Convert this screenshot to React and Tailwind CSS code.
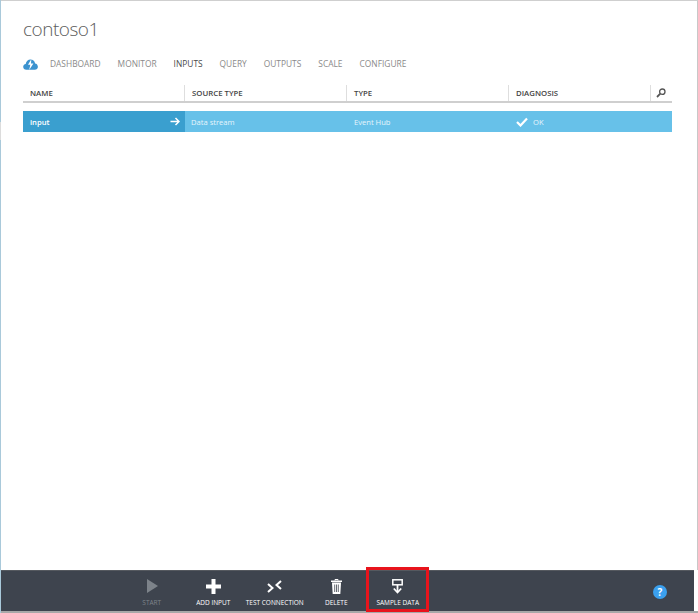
function Cloud() {
  return (
    <svg width="15" height="11" viewBox="0 0 15 11" className="block">
      <path d="M3.300 10.800C1.500 10.800.2 9.500.2 7.800c0-1.500 1-2.700 2.500-2.900C3 2.400 5.100.5 7.500.5c2.300 0 4.200 1.700 4.600 3.900 1.600.2 2.800 1.700 2.800 3.300 0 1.700-1.400 3.100-3.100 3.100z" fill="#3c93cf" />
      <path d="M8.300.2 5 5.800h2.300L6.200 11 10.400 4.600H8z" fill="#fff" />
    </svg>
  );
}

function Tool({ label, dim, children }) {
  return (
    <div className="w-[61.5px] flex flex-col items-center">
      <div className="h-[20px] flex items-center justify-center">{children}</div>
      <span className={"mt-[2px] text-[6.5px] leading-[10px] whitespace-nowrap " + (dim ? "text-[#7d838a]" : "text-white")}>{label}</span>
    </div>
  );
}

export default function App() {
  const tabs = ["DASHBOARD", "MONITOR", "INPUTS", "QUERY", "OUTPUTS", "SCALE", "CONFIGURE"];
  return (
    <div className="relative w-[698px] h-[613px] flex bg-white overflow-hidden font-['Open_Sans',sans-serif]">
      <div className="w-[1px] flex flex-col">
        <div className="h-[122px] bg-[#a9c9da]" />
        <div className="h-[18px] bg-[#dcdcdc]" />
        <div className="flex-1 bg-[#a9c9da]" />
      </div>
      <div className="flex-1 flex flex-col min-w-0">
        <div className="flex-1 flex flex-col border-t border-t-[#cfcfcf] border-r border-r-[#c8c8c8] pl-[22px] pr-[25px]">
          <h1 className="mt-[10px] text-[19px] leading-[36px] font-light text-[#5c5c5c] tracking-[-0.5px]">contoso1</h1>
          <div className="mt-[11px] flex items-center h-[12px]">
            <Cloud />
            <div className="ml-[12px] flex gap-[17px] text-[8.4px] leading-[12px] text-[#8a8a8a]">
              {tabs.map((t) => (
                <span key={t} className={t === "INPUTS" ? "text-[#4a4a4a]" : ""}>{t}</span>
              ))}
            </div>
          </div>
          <div className="mt-[15px] w-[649px] h-[18px] flex border-b-2 border-b-[#cfcfcf] text-[7.8px] leading-[17px] font-semibold text-[#444]">
            <div className="w-[161px] pl-[7px]">NAME</div>
            <div className="w-[162px] pl-[7px] border-l border-l-[#dedede]">SOURCE TYPE</div>
            <div className="w-[162px] pl-[7px] border-l border-l-[#dedede]">TYPE</div>
            <div className="w-[142px] pl-[7px] border-l border-l-[#dedede]">DIAGNOSIS</div>
            <div className="flex-1 border-l border-l-[#dedede] flex justify-center pr-[1px]">
              <svg width="10" height="10" viewBox="0 0 10 10" className="mt-[3px]">
                <circle cx="6.300" cy="3.700" r="2.700" fill="none" stroke="#555" strokeWidth="1.300" />
                <path d="M4.300 5.700 1 9" stroke="#555" strokeWidth="1.800" />
              </svg>
            </div>
          </div>
          <div className="mt-[8px] w-[649px] h-[21px] flex bg-[#67c1e9] text-[7.6px] leading-[22px] text-[#e6f5fc]">
            <div className="w-[162px] pl-[7px] pr-[5px] bg-[#3a9fcf] flex justify-between items-center font-semibold text-white">
              <span>input</span>
              <svg width="10" height="9" viewBox="0 0 10 9">
                <path d="M.5 4.500h8M5.500 1l3.500 3.500L5.500 8" fill="none" stroke="#fff" strokeWidth="1.500" />
              </svg>
            </div>
            <div className="w-[162px] pl-[6px]">Data stream</div>
            <div className="w-[162px] pl-[7px]">Event Hub</div>
            <div className="flex-1 pl-[7px] flex items-center gap-[5px]">
              <svg width="12" height="10" viewBox="0 0 12 10">
                <path d="M1 5l3.500 3.500L11 1.500" fill="none" stroke="#fff" strokeWidth="2.200" />
              </svg>
              <span>OK</span>
            </div>
          </div>
        </div>
        <div className="h-[43px] border-b-2 border-b-[#a8a8a8] flex">
          <div className="w-[693px] bg-[#3e444e] border-t border-t-[#55595f] pt-[5px] pl-[120px] flex relative">
            <Tool label="START" dim>
              <svg width="12" height="14" viewBox="0 0 12 14"><path d="M1 0l11 7-11 7z" fill="#7d838a" /></svg>
            </Tool>
            <Tool label="ADD INPUT">
              <svg width="15" height="15" viewBox="0 0 15 15"><path d="M7.500 0v15M0 7.500h15" stroke="#fff" strokeWidth="4" /></svg>
            </Tool>
            <Tool label="TEST CONNECTION">
              <svg width="15" height="13" viewBox="0 0 15 13" fill="none" stroke="#fff" strokeWidth="2">
                <path d="M1 4l4.500 4L1 12" />
                <path d="M14 1L9.500 5l4.500 4" />
              </svg>
            </Tool>
            <Tool label="DELETE">
              <svg width="11" height="15" viewBox="0 0 11 15">
                <path d="M0 1.500h11v1.500H0z" fill="#fff" />
                <path d="M4 1.500V.5h3v1" fill="none" stroke="#fff" />
                <path d="M1 3.500h9L9.300 15H1.700z" fill="#fff" />
                <path d="M3.700 5.500V13M5.500 5.500V13M7.300 5.500V13" stroke="#3e444e" strokeWidth=".8" />
              </svg>
            </Tool>
            <Tool label="SAMPLE DATA">
              <svg width="11" height="15" viewBox="0 0 11 15" fill="none" stroke="#fff">
                <rect x=".8" y=".8" width="9.400" height="5" strokeWidth="1.500" />
                <path d="M5.500 6v7" strokeWidth="1.800" />
                <path d="M1.800 9.500 5.500 13.500 9.200 9.500" strokeWidth="1.800" />
              </svg>
            </Tool>
            <div className="absolute left-[652px] top-[14px] w-[14px] h-[14px] rounded-full bg-[#3ba0ee] text-white text-[10px] leading-[14px] font-bold text-center">?</div>
          </div>
        </div>
      </div>
      <div className="absolute left-[366px] top-[567px] w-[63px] h-[45px] border-[3px] border-[#e8141c]" />
    </div>
  );
}
